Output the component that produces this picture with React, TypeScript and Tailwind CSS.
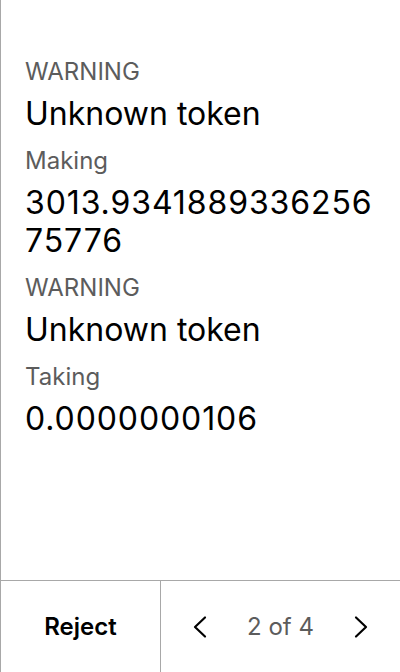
import React from 'react';

const Field = ({ label, value, numeric }: { label: string; value: string; numeric?: boolean }) => (
  <div className="flex flex-col gap-[9px]">
    <div className="text-[24px] leading-[28px] text-[#5c5c5c]">{label}</div>
    <div className={`text-[32px] leading-[38px] text-black break-all ${numeric ? 'tracking-[0.9px]' : ''}`}>{value}</div>
  </div>
);

export default function App() {
  return (
    <div
      className="h-[672px] w-[400px] flex flex-col bg-white border-l border-[#a8a8a8]"
      style={{ fontFamily: 'Inter, "Noto Sans", sans-serif' }}
    >
      {/* Content */}
      <div className="flex-1 flex flex-col gap-[14px] pl-6 pr-6 pt-[58px]">
        <Field label="WARNING" value="Unknown token" />
        <Field label="Making" value="3013.934188933625675776" numeric />
        <Field label="WARNING" value="Unknown token" />
        <Field label="Taking" value="0.0000000106" numeric />
      </div>

      {/* Footer */}
      <div className="h-[92px] flex border-t border-[#a8a8a8]">
        <button className="w-[160px] flex items-center justify-center border-r border-[#a8a8a8] text-[24px] font-semibold text-black">
          Reject
        </button>
        <div className="flex-1 flex items-center justify-center gap-[39px]">
          <svg width="16" height="24" viewBox="0 0 16 24" fill="none" stroke="black" strokeWidth="2.2" strokeLinecap="round" strokeLinejoin="round">
            <path d="M13 2.5 L3 12 L13 21.5" />
          </svg>
          <span className="text-[24px] text-[#5c5c5c]">2 of 4</span>
          <svg width="16" height="24" viewBox="0 0 16 24" fill="none" stroke="black" strokeWidth="2.2" strokeLinecap="round" strokeLinejoin="round">
            <path d="M3 2.5 L13 12 L3 21.5" />
          </svg>
        </div>
      </div>
    </div>
  );
}
